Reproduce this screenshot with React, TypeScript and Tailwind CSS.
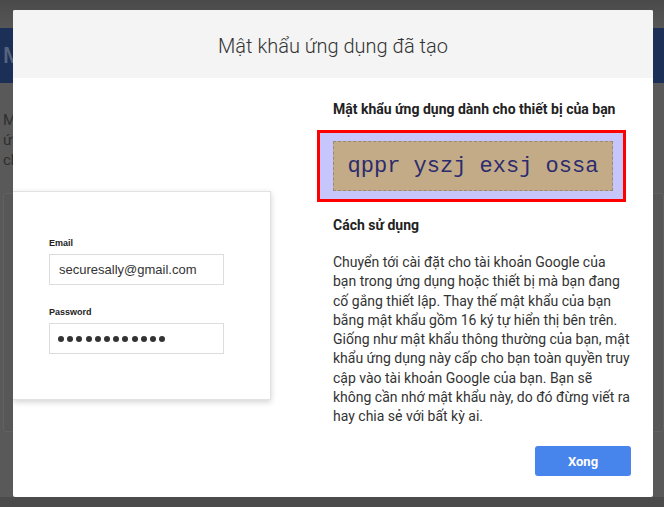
import React from "react"

// line breaks kept as in the original dialog
const steps = [
  "Chuyển tới cài đặt cho tài khoản Google của",
  "bạn trong ứng dụng hoặc thiết bị mà bạn đang",
  "cố gắng thiết lập. Thay thế mật khẩu của bạn",
  "bằng mật khẩu gồm 16 ký tự hiển thị bên trên.",
  "Giống như mật khẩu thông thường của bạn, mật",
  "khẩu ứng dụng này cấp cho bạn toàn quyền truy",
  "cập vào tài khoản Google của bạn. Bạn sẽ",
  "không cần nhớ mật khẩu này, do đó đừng viết ra",
  "hay chia sẻ với bất kỳ ai.",
]

function SignInCard() {
  return (
    <div className="w-[258px] bg-white border-y border-r border-[#e2e2e2] shadow-[0_2px_6px_rgba(0,0,0,0.18)] pl-[36px] pt-[45px] pb-[45px] font-['Liberation_Sans',Arial,sans-serif]">
      <div className="text-[9px] leading-[12px] font-bold text-[#222]">Email</div>
      <div className="mt-[5px] w-[175px] h-[31px] border border-[#dcdcdc] flex items-center pl-[9px] text-[13px] text-[#333]">
        securesally@gmail.com
      </div>
      <div className="mt-[21px] text-[9px] leading-[12px] font-bold text-[#222]">Password</div>
      <div className="mt-[5px] w-[175px] h-[31px] border border-[#dcdcdc] flex items-center pl-[8px] gap-[3.2px]">
        {Array.from({ length: 12 }).map((_, i) => (
          <span key={i} className="w-[6px] h-[6px] rounded-full bg-[#333]" />
        ))}
      </div>
    </div>
  )
}

export default function App() {
  return (
    <div className="relative h-[507px] w-[664px] overflow-hidden bg-[#595959] font-['Roboto',Arial,sans-serif]">
      {/* page behind the modal, already dimmed */}
      <div className="h-[28px] bg-gradient-to-b from-[#4a4a4a] to-[#565656]" />
      <div className="h-[55px] bg-[#1c2f57] flex items-center pl-[3px] text-[22px] font-medium text-[#56647e]">
        M
      </div>
      <div className="pl-[3px] pt-[27px] text-[15px] leading-[20px] text-[#2e2e2e]">
        <div>M</div>
        <div>ứ</div>
        <div>ch</div>
      </div>
      <div className="ml-[3px] mt-[23px] h-[239px] rounded-[3px] border border-[#616161] bg-[#575757]" />
      <div className="absolute inset-x-0 bottom-0 h-[10px] bg-[#4b4b4b]" />

      {/* modal */}
      <div className="absolute left-[13px] top-[10px] w-[640px] h-[487px] bg-white rounded-[2px] overflow-hidden">
        <div className="h-[68px] pt-[4px] bg-[#f4f4f4] flex items-center justify-center text-[20px] font-light text-[#333]">
          Mật khẩu ứng dụng đã tạo
        </div>
        <div className="flex">
          <div className="w-[320px] pt-[113px]">
            <SignInCard />
          </div>
          <div className="w-[300px] pt-[21px] flex flex-col">
            <h3 className="text-[14px] leading-[20px] font-bold text-[#222]">
              Mật khẩu ứng dụng dành cho thiết bị của bạn
            </h3>
            <div className="mt-[11px] -ml-[16px] w-[309px] h-[72px] border-[3px] border-[#ff0000] bg-[#c6c6fd] pl-[13px] pt-[8px]">
              <div className="w-[280px] h-[50px] border border-dashed border-[#9b8a72] bg-[#c4ab88] flex items-center justify-center font-['Liberation_Mono','Courier_New',monospace] text-[22px] text-[#2b2b6e]">
                qppr yszj exsj ossa
              </div>
            </div>
            <h3 className="mt-[13px] text-[14px] leading-[20px] font-bold text-[#222]">Cách sử dụng</h3>
            <div className="mt-[18px] text-[14px] leading-[19.25px] text-[#333]">
              {steps.map((line, i) => (
                <div key={i} className="whitespace-nowrap">
                  {line}
                </div>
              ))}
            </div>
            <button className="self-end mr-[2px] mt-[20px] w-[96px] h-[30px] rounded-[3px] bg-[#4784ec] text-white text-[13px] font-bold">
              Xong
            </button>
          </div>
        </div>
      </div>
    </div>
  )
}
